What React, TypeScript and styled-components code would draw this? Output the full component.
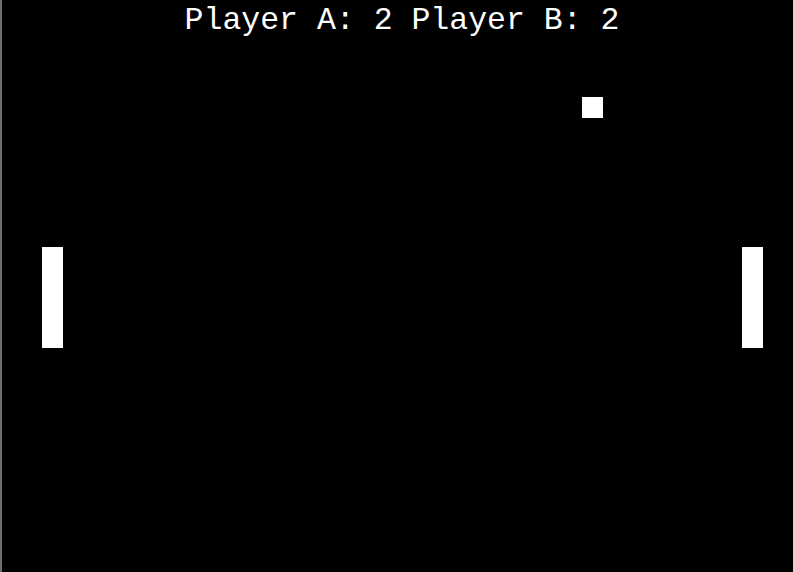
import React from "react";
import styled, { createGlobalStyle } from "styled-components";

const GlobalStyle = createGlobalStyle`
  html, body {
    margin: 0;
    padding: 0;
    background: #000000;
    overflow: hidden;
  }
`;

const Window = styled.div`
  width: 793px;
  height: 572px;
  display: flex;
  background: #000000;
  overflow: hidden;
`;

const Edge = styled.div`
  width: 2px;
  flex: none;
  background: #6e6e6e;
`;

const Field = styled.div`
  position: relative;
  width: 800px;
  height: 572px;
  flex: none;
  background: #000000;
`;

const Score = styled.div`
  display: flex;
  justify-content: center;
  padding-top: 3px;

  font-family: "Liberation Mono", "Courier New", monospace;
  font-size: 31.5px;
  line-height: 36px;
  color: #ffffff;
  white-space: pre;
`;

const Block = styled.div<{ $x: number; $y: number; $w: number; $h: number }>`
  position: absolute;
  left: ${(p) => p.$x}px;
  top: ${(p) => p.$y}px;
  width: ${(p) => p.$w}px;
  height: ${(p) => p.$h}px;
  background: #ffffff;
`;

export default function App() {
  const scoreA = 2;
  const scoreB = 2;

  return (
    <>
      <GlobalStyle />
      <Window>
        <Edge />
        <Field>
          <Score>
            Player A: {scoreA} Player B: {scoreB}
          </Score>
          {/* paddles */}
          <Block $x={40} $y={247} $w={21} $h={101} />
          <Block $x={740} $y={247} $w={21} $h={101} />
          {/* ball */}
          <Block $x={580} $y={97} $w={21} $h={21} />
        </Field>
      </Window>
    </>
  );
}
